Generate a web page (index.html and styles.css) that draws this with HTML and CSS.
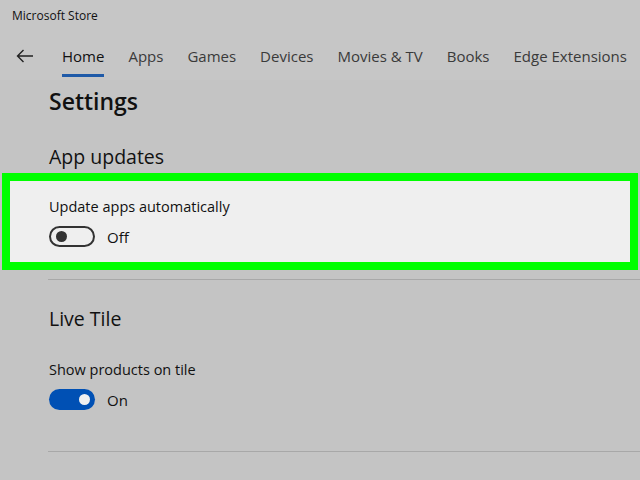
FILE: index.html
```html
<!DOCTYPE html>
<html>
<head>
<meta charset="utf-8">
<link rel="stylesheet" href="styles.css">
</head>
<body>
<div class="app">
  <header class="titlebar">Microsoft Store</header>
  <nav class="nav">
    <span class="back">
      <svg width="18" height="14" viewBox="0 0 18 14"><path d="M17 7H1.5M7.5 1L1.5 7l6 6" fill="none" stroke="#222" stroke-width="1.4"/></svg>
    </span>
    <ul class="tabs">
      <li class="tab active">Home</li>
      <li class="tab">Apps</li>
      <li class="tab">Games</li>
      <li class="tab">Devices</li>
      <li class="tab">Movies &amp; TV</li>
      <li class="tab">Books</li>
      <li class="tab">Edge Extensions</li>
    </ul>
  </nav>
  <main class="content">
    <h1 class="page-title">Settings</h1>
    <h2 class="section-title">App updates</h2>
    <div class="highlight">
      <div class="setting-label">Update apps automatically</div>
      <div class="toggle-row">
        <span class="toggle off"><span class="knob"></span></span>
        <span class="toggle-text">Off</span>
      </div>
    </div>
    <hr class="divider first">
    <h2 class="section-title live">Live Tile</h2>
    <div class="setting">
      <div class="setting-label">Show products on tile</div>
      <div class="toggle-row">
        <span class="toggle on"><span class="knob"></span></span>
        <span class="toggle-text">On</span>
      </div>
    </div>
    <hr class="divider second">
  </main>
</div>
</body>
</html>
```
FILE: styles.css
```css
* { box-sizing: border-box; }
html, body { margin: 0; padding: 0; }
body {
  width: 640px;
  height: 480px;
  overflow: hidden;
  background: #c4c4c4;
  font-family: "Open Sans", "Noto Sans", sans-serif;
  color: #1a1a1a;
}
.app { display: flex; flex-direction: column; }
.titlebar {
  height: 32px;
  padding: 7px 0 0 12px;
  font-size: 12px;
  color: #111;
  background: #c6c6c6;
}
.nav {
  height: 48px;
  display: flex;
  align-items: flex-start;
  background: #c6c6c6;
}
.back {
  width: 62px;
  padding: 17px 0 0 16px;
  display: flex;
}
.tabs {
  list-style: none;
  margin: 0;
  padding: 0;
  display: flex;
  gap: 24px;
}
.tab {
  font-size: 15px;
  color: #3a3a3a;
  padding-top: 14px;
  height: 45px;
  border-bottom: 3px solid transparent;
}
.tab.active {
  color: #111;
  border-bottom-color: #1f5aa8;
}
.content {
  display: flex;
  flex-direction: column;
}
.page-title {
  margin: 6px 0 0 49px;
  font-size: 23px;
  font-weight: 600;
  line-height: 30px;
  color: #111;
}
.section-title {
  margin: 28px 0 0 49px;
  font-size: 19.5px;
  font-weight: 400;
  line-height: 26px;
  color: #111;
}
.highlight {
  margin: 3px 2px 0 2px;
  height: 97px;
  border: 8px solid #00ff00;
  background: #efefef;
  padding: 16px 0 0 39px;
}
.setting-label {
  font-size: 14.5px;
  line-height: 20px;
  color: #111;
}
.toggle-row {
  display: flex;
  align-items: center;
  gap: 12px;
  margin-top: 9px;
}
.toggle {
  width: 46px;
  height: 21px;
  border-radius: 11px;
  display: flex;
  align-items: center;
  padding: 0 5px;
}
.toggle .knob {
  width: 11px;
  height: 11px;
  border-radius: 50%;
}
.toggle.off {
  border: 2px solid #333;
}
.toggle.off .knob { background: #333; }
.toggle.on {
  background: #0050b4;
  justify-content: flex-end;
}
.toggle.on .knob { background: #f0f0f0; }
.toggle-text {
  font-size: 15px;
  color: #111;
}
.divider {
  margin: 9px 0 0 48px;
  border: 0;
  border-top: 1px solid #a8a8a8;
  height: 0;
}
.section-title.live { margin-top: 26px; }
.setting { padding: 28px 0 0 49px; }
.divider.second { margin-top: 41px; }
```
